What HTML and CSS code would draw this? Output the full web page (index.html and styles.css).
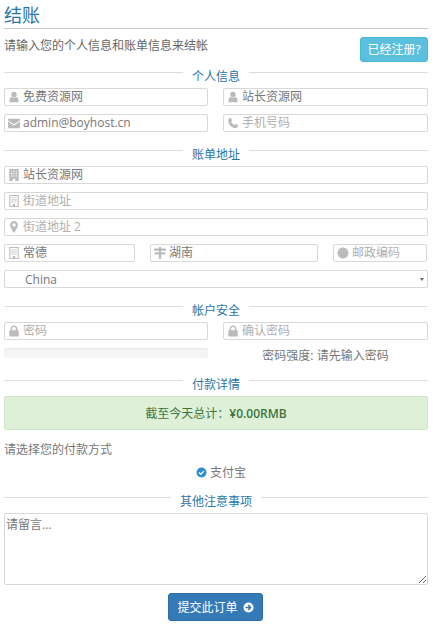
FILE: index.html
```html
<!DOCTYPE html>
<html lang="zh-CN">
<head>
<meta charset="utf-8">
<title>结账</title>
<link rel="stylesheet" href="styles.css">
</head>
<body>
<svg class="defs" aria-hidden="true">
  <symbol id="i-user" viewBox="0 0 14 14"><circle cx="7" cy="4" r="3.200"/><path d="M1.800 13V10.800c0-2.200 1-3.700 2.600-3.900 .7.600 1.600 1 2.600 1s1.900-.4 2.600-1c1.600.2 2.600 1.700 2.600 3.900V13z"/></symbol>
  <symbol id="i-mail" viewBox="0 0 14 14"><path d="M1.200 2h11.600c.7 0 1.200.5 1.200 1.100 0 .6-.4 1.100-.9 1.500L7.600 8.300c-.4.2-.8.2-1.200 0L.9 4.600C.4 4.200 0 3.700 0 3.100 0 2.500.5 2 1.200 2z"/><path d="M0 5.300l6 4c.6.4 1.400.4 2 0l6-4v6.500c0 .7-.5 1.200-1.200 1.200H1.200C.5 13 0 12.500 0 11.800z"/></symbol>
  <symbol id="i-phone" viewBox="0 0 14 14"><path d="M2.800 1.500L4.500 1l1.600 3-1.300 1.300c.5 1.600 2.200 3.400 3.900 3.900l1.300-1.300 3 1.600-.5 1.700c-.3.9-1.500 1.800-2.500 1.800-4.500 0-8.500-4-8.500-8.500 0-1 .4-2.700 1.300-3z"/></symbol>
  <symbol id="i-building" viewBox="0 0 14 14"><path fill-rule="evenodd" d="M1.500 0h11v14H8.500v-2.500h-3V14h-4zM3.500 2v1.300H5V2zM6.300 2v1.300h1.400V2zM9 2v1.300h1.500V2zM3.500 4.700V6H5V4.700zM6.300 4.700V6h1.400V4.700zM9 4.700V6h1.500V4.700zM3.500 7.500v1.300H5V7.500zM6.300 7.500v1.300h1.400V7.500zM9 7.500v1.300h1.500V7.500z"/></symbol>
  <symbol id="i-building-o" viewBox="0 0 14 14"><path fill-rule="evenodd" d="M1.500 0h11v14h-11zM2.700 1.200v11.600h3V10.500h2.600v2.300h3V1.200zM4 2.500h1.500v1.300H4zM6.300 2.500h1.400v1.300H6.300zM8.500 2.500H10v1.300H8.500zM4 5h1.500v1.300H4zM6.300 5h1.400v1.300H6.300zM8.500 5H10v1.300H8.500zM4 7.500h1.500v1.300H4zM6.300 7.500h1.400v1.300H6.300zM8.500 7.500H10v1.300H8.500z"/></symbol>
  <symbol id="i-marker" viewBox="0 0 14 14"><path fill-rule="evenodd" d="M7 0c2.700 0 4.600 2 4.600 4.700 0 2.800-3 6.900-4.600 9.300C5.400 11.600 2.400 7.500 2.400 4.700 2.400 2 4.300 0 7 0zm0 2.700a2 2 0 100 4 2 2 0 000-4z"/></symbol>
  <symbol id="i-signs" viewBox="0 0 14 14"><path d="M0 1.800h14v2.600H0zM1 6.200h12v2.600H1zM5.700 0h2.600v14H5.700z"/></symbol>
  <symbol id="i-cert" viewBox="0 0 14 14"><path d="M7 0l1.500 1.300L10.400.8l.6 1.800 1.900.6-.5 1.900L14 7l-1.600 1.900.5 1.900-1.900.6-.6 1.800-1.900-.5L7 14l-1.900-1.300-1.500.5-.6-1.800-1.900-.6.5-1.900L0 7l1.600-1.900-.5-1.900 1.900-.6.6-1.800 1.900.5z"/></symbol>
  <symbol id="i-lock" viewBox="0 0 14 14"><path fill-rule="evenodd" d="M3 6V4.300C3 2 4.800.5 7 .5s4 1.500 4 3.800V6h.5c.6 0 1 .4 1 1v5.500c0 .6-.4 1-1 1h-9c-.6 0-1-.4-1-1V7c0-.6.4-1 1-1zm1.800 0h4.400V4.300C9.200 3 8.200 2.200 7 2.200S4.800 3 4.800 4.300z"/></symbol>
</svg>

<main class="page">
  <h1 class="title">结账</h1>
  <div class="intro">
    <p>请输入您的个人信息和账单信息来结帐</p>
    <a class="btn-login" href="#">已经注册?</a>
  </div>

  <h2 class="section"><span>个人信息</span></h2>
  <div class="rows">
    <div class="cols-2">
      <label class="field"><svg class="ic"><use href="#i-user"/></svg><input value="免费资源网"></label>
      <label class="field"><svg class="ic"><use href="#i-user"/></svg><input value="站长资源网"></label>
    </div>
    <div class="cols-2">
      <label class="field"><svg class="ic"><use href="#i-mail"/></svg><input value="admin@boyhost.cn"></label>
      <label class="field"><svg class="ic"><use href="#i-phone"/></svg><input placeholder="手机号码"></label>
    </div>
  </div>

  <h2 class="section"><span>账单地址</span></h2>
  <div class="rows">
    <label class="field"><svg class="ic"><use href="#i-building"/></svg><input value="站长资源网"></label>
    <label class="field"><svg class="ic"><use href="#i-building-o"/></svg><input placeholder="街道地址"></label>
    <label class="field"><svg class="ic"><use href="#i-marker"/></svg><input placeholder="街道地址 2"></label>
    <div class="cols-3">
      <label class="field"><svg class="ic"><use href="#i-building-o"/></svg><input value="常德"></label>
      <label class="field"><svg class="ic"><use href="#i-signs"/></svg><input value="湖南"></label>
      <label class="field"><svg class="ic"><use href="#i-cert"/></svg><input placeholder="邮政编码"></label>
    </div>
    <div class="select">
      <span>China</span>
      <i class="caret"></i>
    </div>
  </div>

  <h2 class="section"><span>帐户安全</span></h2>
  <div class="rows rows-last">
    <div class="cols-2">
      <label class="field"><svg class="ic"><use href="#i-lock"/></svg><input placeholder="密码"></label>
      <label class="field"><svg class="ic"><use href="#i-lock"/></svg><input placeholder="确认密码"></label>
    </div>
    <div class="cols-2">
      <div class="strength-bar"></div>
      <p class="strength-text">密码强度: 请先输入密码</p>
    </div>
  </div>

  <h2 class="section"><span>付款详情</span></h2>
  <div class="total">截至今天总计：<b>¥0.00RMB</b></div>
  <p class="pay-label">请选择您的付款方式</p>
  <div class="pay-method">
    <svg class="radio" viewBox="0 0 12 12"><circle cx="6" cy="6" r="5.500" fill="#2a8fce"/><path d="M3.300 6.100l1.900 1.800 3.500-3.400" fill="none" stroke="#fff" stroke-width="1.500"/></svg>
    <span>支付宝</span>
  </div>

  <h2 class="section section-notes"><span>其他注意事项</span></h2>
  <textarea class="notes" placeholder="请留言..."></textarea>
  <div class="submit-row">
    <button class="btn-submit" type="button">提交此订单
      <svg class="arrow" viewBox="0 0 12 12"><circle cx="6" cy="6" r="5.500" fill="#fff"/><path d="M2.800 6h5M5.700 3.400L8.300 6 5.700 8.600" fill="none" stroke="#337ab7" stroke-width="1.600"/></svg>
    </button>
  </div>
</main>
</body>
</html>
```

FILE: styles.css
```css
* { box-sizing: border-box; }
html, body { margin: 0; padding: 0; background: #fff; }
body {
  font-family: "Open Sans", "Noto Sans CJK SC", sans-serif;
  font-size: 12px;
  color: #777;
  overflow: hidden;
}
.defs { display: none; }
.page { width: 424px; height: 624px; margin-left: 4px; }

.title {
  margin: 0;
  height: 29px;
  padding-top: 3px;
  font-size: 18px;
  line-height: 25px;
  font-weight: 400;
  color: #2a75a8;
  border-bottom: 1px solid #ccc;
}
.intro {
  display: flex;
  justify-content: space-between;
  height: 36px;
  padding-top: 8px;
}
.intro p { margin: 1px 0 0; line-height: 16px; color: #666; }
.btn-login {
  width: 68px;
  height: 25px;
  line-height: 23px;
  text-align: center;
  color: #fff;
  background: #5bc0de;
  border: 1px solid #46b8da;
  border-radius: 3px;
  text-decoration: none;
}

.section {
  display: flex;
  align-items: center;
  gap: 9px;
  margin: 0;
  height: 18px;
  padding-top: 6px;
  font-size: 12px;
  font-weight: 400;
  color: #2a75a8;
  line-height: 16px;
}
.section::before, .section::after {
  content: "";
  flex: 1;
  height: 1px;
  background: #ddd;
  position: relative;
  top: -5px;
}
.rows { display: flex; flex-direction: column; gap: 8px; margin-top: 5px; margin-bottom: 11px; }
.rows-last { margin-bottom: 9px; }
.cols-2 { display: grid; grid-template-columns: 204px 205px; gap: 15px; }
.cols-3 { display: grid; grid-template-columns: 131px 168px 94px; gap: 15px; }

.field {
  display: flex;
  align-items: center;
  gap: 3px;
  height: 18px;
  padding-left: 3px;
  border: 1px solid #d8d8d8;
  border-radius: 2px;
  background: #fff;
}
.ic { width: 12px; height: 12px; flex: none; fill: #bbb; }
.field input {
  flex: 1;
  min-width: 0;
  border: 0;
  padding: 0;
  outline: 0;
  background: transparent;
  font: inherit;
  color: #777;
  height: 16px;
  line-height: 16px;
}
.field input::placeholder { color: #b0b0b0; opacity: 1; }

.select {
  display: flex;
  align-items: center;
  justify-content: space-between;
  height: 18px;
  padding: 0 3px 0 20px;
  border: 1px solid #d8d8d8;
  border-radius: 2px;
}
.caret { width: 0; height: 0; border: 2px solid transparent; border-top: 3px solid #666; border-bottom: 0; }

.strength-bar { height: 10px; background: #f5f5f5; border-radius: 2px; box-shadow: inset 0 1px 2px rgba(0,0,0,.06); }
.strength-text { margin: 0; text-align: center; line-height: 16px; }

.total {
  height: 34px;
  margin-top: 5px;
  line-height: 34px;
  text-align: center;
  color: #3c763d;
  background: #dff0d8;
  border: 1px solid #d0e6c5;
  border-radius: 2px;
}
.total b { font-weight: 600; }
.pay-label { margin: 12px 0 0; line-height: 16px; }
.pay-method {
  display: flex;
  justify-content: center;
  align-items: center;
  gap: 3px;
  height: 18px;
  margin-top: 5px;
  padding-left: 10px;
}
.radio { width: 11px; height: 11px; }
.section-notes { margin-top: 9px; }
.notes {
  display: block;
  width: 100%;
  height: 72px;
  margin-top: 5px;
  padding: 1px;
  border: 1px solid #d8d8d8;
  border-radius: 2px;
  font: inherit;
  color: #777;
  outline: 0;
}
.notes::placeholder { color: #777; opacity: 1; }
.submit-row { display: flex; justify-content: center; margin-top: 8px; padding-right: 1px; }
.btn-submit {
  display: flex;
  align-items: center;
  justify-content: center;
  gap: 5px;
  width: 95px;
  height: 28px;
  padding: 0;
  font: inherit;
  color: #fff;
  background: #337ab7;
  border: 1px solid #2e6da4;
  border-radius: 3px;
}
.arrow { width: 11px; height: 11px; }
```
